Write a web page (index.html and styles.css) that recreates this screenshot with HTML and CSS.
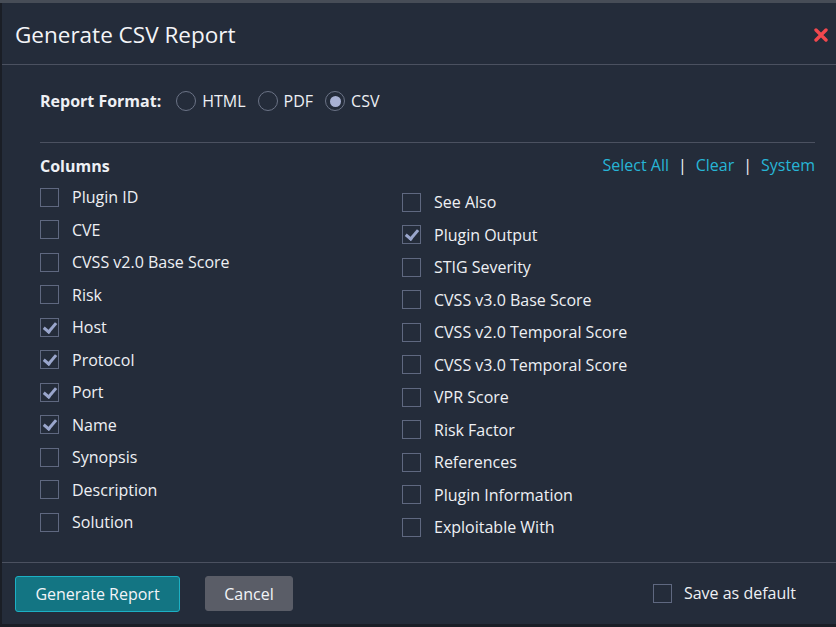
FILE: index.html
```html
<!DOCTYPE html>
<html>
<head>
<meta charset="utf-8">
<link rel="stylesheet" href="styles.css">
</head>
<body>
<div class="dialog">
  <div class="header">
    <h1 class="title">Generate CSV Report</h1>
    <svg class="close" width="14" height="14" viewBox="0 0 14 14"><path d="M2 2 L12 12 M12 2 L2 12" stroke="#f2484e" stroke-width="3.4" stroke-linecap="round"/></svg>
  </div>
  <div class="content">
    <div class="format-row">
      <span class="format-label">Report Format:</span>
      <label class="radio"><span class="radio-dot"></span>HTML</label>
      <label class="radio"><span class="radio-dot"></span>PDF</label>
      <label class="radio"><span class="radio-dot on"></span>CSV</label>
    </div>
    <div class="rule"></div>
    <div class="cols-head">
      <span class="cols-title">Columns</span>
      <span class="links"><a>Select All</a><span class="sep">|</span><a>Clear</a><span class="sep">|</span><a>System</a></span>
    </div>
    <div class="grid">
      <div class="col">
        <div class="item"><span class="box"></span>Plugin ID</div>
        <div class="item"><span class="box"></span>CVE</div>
        <div class="item"><span class="box"></span>CVSS v2.0 Base Score</div>
        <div class="item"><span class="box"></span>Risk</div>
        <div class="item"><span class="box checked"></span>Host</div>
        <div class="item"><span class="box checked"></span>Protocol</div>
        <div class="item"><span class="box checked"></span>Port</div>
        <div class="item"><span class="box checked"></span>Name</div>
        <div class="item"><span class="box"></span>Synopsis</div>
        <div class="item"><span class="box"></span>Description</div>
        <div class="item"><span class="box"></span>Solution</div>
      </div>
      <div class="col col-right">
        <div class="item"><span class="box"></span>See Also</div>
        <div class="item"><span class="box checked"></span>Plugin Output</div>
        <div class="item"><span class="box"></span>STIG Severity</div>
        <div class="item"><span class="box"></span>CVSS v3.0 Base Score</div>
        <div class="item"><span class="box"></span>CVSS v2.0 Temporal Score</div>
        <div class="item"><span class="box"></span>CVSS v3.0 Temporal Score</div>
        <div class="item"><span class="box"></span>VPR Score</div>
        <div class="item"><span class="box"></span>Risk Factor</div>
        <div class="item"><span class="box"></span>References</div>
        <div class="item"><span class="box"></span>Plugin Information</div>
        <div class="item"><span class="box"></span>Exploitable With</div>
      </div>
    </div>
  </div>
  <div class="footer">
    <button class="btn btn-primary">Generate Report</button>
    <button class="btn btn-cancel">Cancel</button>
    <div class="save"><span class="box"></span>Save as default</div>
  </div>
</div>
</body>
</html>
```
FILE: styles.css
```css
* { box-sizing: border-box; }
html, body { margin: 0; padding: 0; }
body {
  background: #1a1e26;
  padding: 3px 0 0 2px;
  font-family: "Open Sans", "Noto Sans", sans-serif;
  color: #eef0f4;
  width: 836px;
  height: 627px;
  overflow: hidden;
  box-shadow: inset 0 3px 0 #474d57;
}
.dialog {
  background: #242c3a;
  height: 621px;
  display: flex;
  flex-direction: column;
}
.header {
  height: 62px;
  border-bottom: 1px solid #4b5160;
  display: flex;
  align-items: center;
  justify-content: space-between;
  padding: 0 8px 0 13px;
}
.title {
  margin: 0;
  font-size: 22.5px;
  font-weight: 400;
  color: #f4f5f8;
  position: relative;
  top: 1px;
}
.close { position: relative; top: 1px; }
.content {
  padding: 23px 21px 0 38px;
}
.format-row {
  display: flex;
  align-items: center;
  height: 26px;
  font-size: 16px;
}
.format-label {
  font-weight: 700;
  margin-right: 15px;
}
.radio {
  display: flex;
  align-items: center;
  margin-right: 12px;
}
.radio-dot {
  width: 20px;
  height: 20px;
  border: 1px solid #6b7386;
  border-radius: 50%;
  margin-right: 6px;
  display: inline-flex;
  align-items: center;
  justify-content: center;
}
.radio-dot.on::after {
  content: "";
  width: 11px;
  height: 11px;
  border-radius: 50%;
  background: #a9b2d4;
}
.rule {
  height: 1px;
  background: #4b5160;
  margin-top: 28px;
}
.cols-head {
  display: flex;
  justify-content: space-between;
  align-items: center;
  margin-top: 12px;
  height: 22px;
}
.cols-title {
  font-weight: 700;
  font-size: 16px;
}
.links {
  font-size: 16px;
  color: #27b5d6;
  margin-top: -2px;
}
.links a { color: #27b5d6; }
.sep {
  color: #f2f4f8;
  margin: 0 9px;
}
.grid {
  display: grid;
  grid-template-columns: 362px 1fr;
  margin-top: 4px;
}
.col-right { padding-top: 5px; }
.item {
  display: flex;
  align-items: center;
  height: 32.5px;
  font-size: 16px;
}
.box {
  width: 19px;
  height: 19px;
  border: 1px solid #5f6880;
  margin-right: 13px;
  flex: none;
  position: relative;
}
.box.checked::after {
  content: "";
  position: absolute;
  left: 5px;
  top: 1px;
  width: 5px;
  height: 10px;
  border: solid #9aa6cc;
  border-width: 0 3px 3px 0;
  transform: rotate(40deg);
}
.footer {
  margin-top: auto;
  height: 62px;
  border-top: 1px solid #4b5160;
  display: flex;
  align-items: flex-start;
  padding: 13px 40px 0 13px;
}
.btn {
  font-family: "Open Sans", "Noto Sans", sans-serif;
  font-size: 16px;
  color: #f2f4f8;
  border-radius: 3px;
  height: 36px;
}
.btn-primary {
  width: 165px;
  background: #137583;
  border: 1px solid #1cb0c4;
}
.btn-cancel {
  width: 88px;
  height: 35px;
  margin-left: 25px;
  background: #5a5d67;
  border: 1px solid #5a5d67;
}
.save {
  margin-left: auto;
  display: flex;
  align-items: center;
  font-size: 16px;
  height: 34px;
}
.save .box { margin-right: 12px; }
```
